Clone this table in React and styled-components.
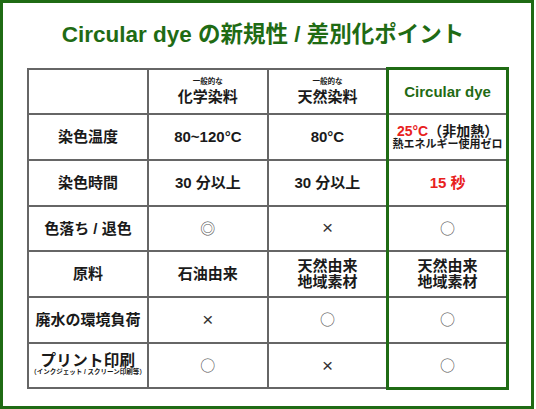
import styled, { createGlobalStyle } from "styled-components";

const GREEN = "#1f6b14";
const LINE = "#666";

const GlobalStyle = createGlobalStyle`
  html, body {
    margin: 0;
    padding: 0;
    background: #fff;
  }
  body {
    font-family: "Liberation Sans", "Noto Sans CJK JP", sans-serif;
    color: #1a1a1a;
  }
`;

const Frame = styled.div`
  box-sizing: border-box;
  width: 534px;
  height: 409px;
  border: 3px solid ${GREEN};
  background: #fff;
`;

const Title = styled.h1`
  box-sizing: border-box;
  margin: 0;
  height: 64px;
  padding: 0 8px 6px 0;
  display: flex;
  align-items: center;
  justify-content: center;
  font-size: 22.5px;
  font-weight: bold;
  color: ${GREEN};
`;

const Table = styled.table`
  margin-left: 24px;
  width: 482px;
  border-collapse: collapse;
  table-layout: fixed;
`;

const Row = styled.tr`
  height: 45.7px;
`;

const Cell = styled.td`
  border: 2px solid ${LINE};
  padding: 0;
  text-align: center;
  vertical-align: middle;
  font-size: 15px;
  font-weight: bold;
  line-height: 1.05;
  color: #1a1a1a;
  ${(p) =>
    p.$hl &&
    `
    border-left: 3px solid ${GREEN};
    border-right: 3px solid ${GREEN};
  `}
  ${(p) => p.$top && `border-top: 3px solid ${GREEN};`}
  ${(p) => p.$bottom && `border-bottom: 3px solid ${GREEN};`}
`;

const Small = styled.div`
  font-size: 7.5px;
  line-height: 1;
  margin-bottom: 3px;
`;

const GreenText = styled.span`
  color: ${GREEN};
`;

const Red = styled.span`
  color: #e8211d;
`;

const TempLine = styled.div`
  font-size: 14px;
  line-height: 1;
`;

const Sub = styled.div`
  font-size: 11px;
  line-height: 1;
  margin-top: 1px;
`;

const Mark = styled.span`
  font-weight: normal;
  color: #555;
  font-size: 15px;
  font-family: "Noto Sans CJK JP", sans-serif;
`;

const Cross = styled.span`
  font-weight: normal;
  color: #333;
  font-size: 19px;
  font-family: "Liberation Sans", sans-serif;
`;

const Print = styled.div`
  font-size: 15.5px;
  line-height: 1;
  margin-top: -2px;
  letter-spacing: 0.3px;
`;

const Tiny = styled.div`
  font-size: 6.5px;
  line-height: 1;
  margin-top: 1px;
  white-space: nowrap;
`;

const Circle = () => <Mark>○</Mark>;
const X = () => <Cross>×</Cross>;

const rows = [
  {
    label: "染色温度",
    a: "80~120°C",
    b: "80°C",
    c: (
      <>
        <TempLine>
          <Red>25°C</Red>（非加熱）
        </TempLine>
        <Sub>熱エネルギー使用ゼロ</Sub>
      </>
    ),
  },
  { label: "染色時間", a: "30 分以上", b: "30 分以上", c: <Red>15 秒</Red> },
  { label: "色落ち / 退色", a: <Mark>◎</Mark>, b: <X />, c: <Circle /> },
  {
    label: "原料",
    a: "石油由来",
    b: (
      <>
        天然由来
        <br />
        地域素材
      </>
    ),
    c: (
      <>
        天然由来
        <br />
        地域素材
      </>
    ),
  },
  { label: "廃水の環境負荷", a: <X />, b: <Circle />, c: <Circle /> },
  {
    label: (
      <>
        <Print>プリント印刷</Print>
        <Tiny>（インクジェット / スクリーン印刷等）</Tiny>
      </>
    ),
    a: <Circle />,
    b: <X />,
    c: <Circle />,
  },
];

export default function App() {
  return (
    <>
      <GlobalStyle />
      <Frame>
        <Title>Circular dye の新規性 / 差別化ポイント</Title>
        <Table>
          <tbody>
            <Row>
              <Cell />
              <Cell>
                <Small>一般的な</Small>
                化学染料
              </Cell>
              <Cell>
                <Small>一般的な</Small>
                天然染料
              </Cell>
              <Cell $hl $top>
                <GreenText>Circular dye</GreenText>
              </Cell>
            </Row>
            {rows.map((r, i) => (
              <Row key={i}>
                <Cell>{r.label}</Cell>
                <Cell>{r.a}</Cell>
                <Cell>{r.b}</Cell>
                <Cell $hl $bottom={i === rows.length - 1}>
                  {r.c}
                </Cell>
              </Row>
            ))}
          </tbody>
        </Table>
      </Frame>
    </>
  );
}
